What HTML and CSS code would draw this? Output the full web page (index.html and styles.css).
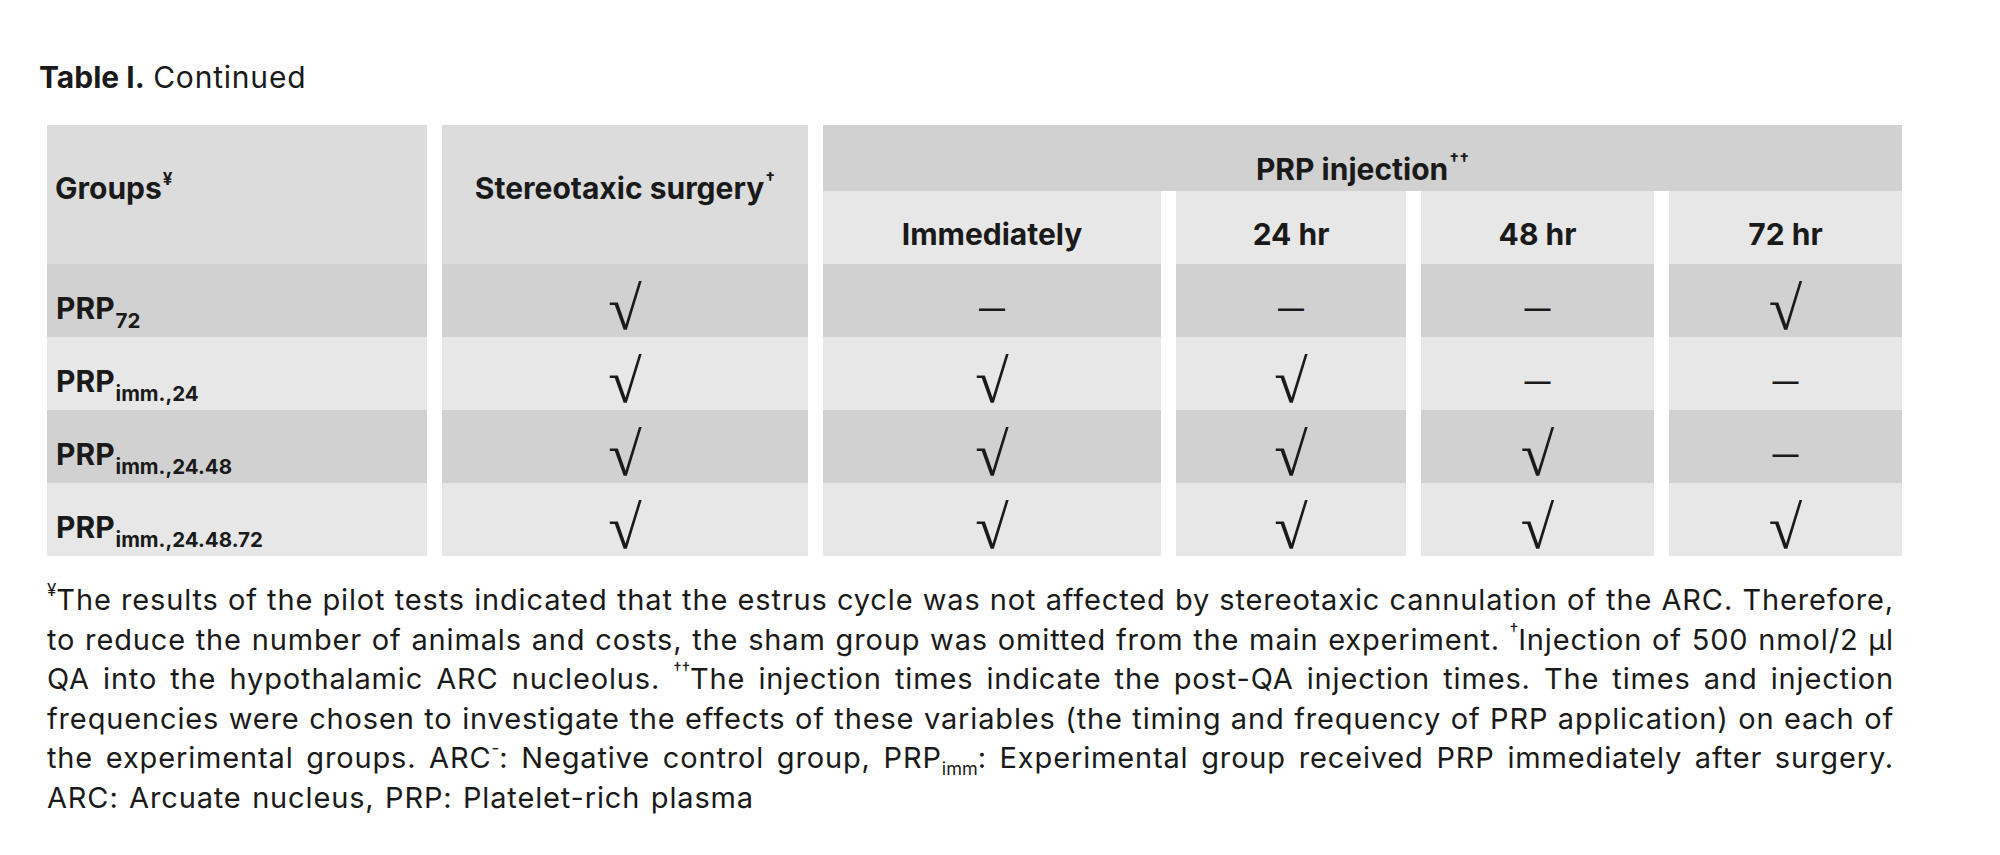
FILE: index.html
```html
<!DOCTYPE html>
<html lang="en">
<head>
<meta charset="utf-8">
<title>Table I. Continued</title>
<link rel="stylesheet" href="styles.css">
</head>
<body>
<div class="page">
  <p class="title"><b>Table I.</b> <span class="reg">Continued</span></p>

  <div class="grid">
    <div class="cell hdr-main name-hdr"><span class="txt">Groups<sup class="hsup">¥</sup></span></div>
    <div class="cell hdr-main"><span class="txt">Stereotaxic surgery<sup class="hsup">†</sup></span></div>
    <div class="cell hdr-top span4"><span class="txt">PRP injection<sup class="hsup">††</sup></span></div>
    <div class="cell hdr-sub"><span class="txt">Immediately</span></div>
    <div class="cell hdr-sub"><span class="txt">24 hr</span></div>
    <div class="cell hdr-sub"><span class="txt">48 hr</span></div>
    <div class="cell hdr-sub"><span class="txt">72 hr</span></div>

    <div class="row dark">
      <div class="cell name"><span class="txt">PRP<sub class="gsub">72</sub></span></div>
      <div class="cell"><span class="chk">√</span></div>
      <div class="cell"><span class="dash">—</span></div>
      <div class="cell"><span class="dash">—</span></div>
      <div class="cell"><span class="dash">—</span></div>
      <div class="cell"><span class="chk">√</span></div>
    </div>
    <div class="row light">
      <div class="cell name"><span class="txt">PRP<sub class="gsub">imm.,24</sub></span></div>
      <div class="cell"><span class="chk">√</span></div>
      <div class="cell"><span class="chk">√</span></div>
      <div class="cell"><span class="chk">√</span></div>
      <div class="cell"><span class="dash">—</span></div>
      <div class="cell"><span class="dash">—</span></div>
    </div>
    <div class="row dark">
      <div class="cell name"><span class="txt">PRP<sub class="gsub">imm.,24.48</sub></span></div>
      <div class="cell"><span class="chk">√</span></div>
      <div class="cell"><span class="chk">√</span></div>
      <div class="cell"><span class="chk">√</span></div>
      <div class="cell"><span class="chk">√</span></div>
      <div class="cell"><span class="dash">—</span></div>
    </div>
    <div class="row light">
      <div class="cell name"><span class="txt">PRP<sub class="gsub">imm.,24.48.72</sub></span></div>
      <div class="cell"><span class="chk">√</span></div>
      <div class="cell"><span class="chk">√</span></div>
      <div class="cell"><span class="chk">√</span></div>
      <div class="cell"><span class="chk">√</span></div>
      <div class="cell"><span class="chk">√</span></div>
    </div>
  </div>

  <div class="notes">
    <span class="ln"><sup class="nsup">¥</sup>The results of the pilot tests indicated that the estrus cycle was not affected by stereotaxic cannulation of the ARC. Therefore,</span>
    <span class="ln">to reduce the number of animals and costs, the sham group was omitted from the main experiment. <sup class="nsup">†</sup>Injection of 500 nmol/2 µl</span>
    <span class="ln">QA into the hypothalamic ARC nucleolus. <sup class="nsup">††</sup>The injection times indicate the post-QA injection times. The times and injection</span>
    <span class="ln">frequencies were chosen to investigate the effects of these variables (the timing and frequency of PRP application) on each of</span>
    <span class="ln">the experimental groups. ARC<sup class="nsup">-</sup>: Negative control group, PRP<sub class="nsub">imm</sub>: Experimental group received PRP immediately after surgery.</span>
    <span class="ln last">ARC: Arcuate nucleus, PRP: Platelet-rich plasma</span>
  </div>
</div>
</body>
</html>
```

FILE: styles.css
```css
html, body {
  margin: 0;
  padding: 0;
  background: #ffffff;
}

body {
  font-family: Inter, Lato, "Liberation Sans", sans-serif;
  color: #1a1a1a;
}

.page {
  padding-top: 59px;
}

.title {
  margin: 0 0 30px 39px;
  font-size: 30px;
  line-height: 36px;
  font-weight: 400;
}

.title b {
  font-weight: 700;
}

.title .reg {
  letter-spacing: 0.8px;
}

.grid {
  margin-left: 47px;
  display: grid;
  grid-template-columns: 380px 366px 338px 230px 233px 233px;
  grid-template-rows: 66px 73px 73px 73px 73px 73px;
  column-gap: 15px;
  row-gap: 0;
}

.row {
  display: contents;
}

.cell {
  display: flex;
  align-items: center;
  justify-content: center;
  font-size: 30px;
  line-height: 36px;
  font-weight: 700;
  white-space: nowrap;
  box-sizing: border-box;
  padding-top: 14px;
}

.txt {
  display: block;
}

.hdr-main {
  grid-row: span 2;
  background: #dcdcdc;
  padding-top: 0;
  padding-bottom: 14px;
}

.name-hdr {
  justify-content: flex-start;
  padding-left: 8px;
}

.span4 {
  grid-column: span 4;
}

.hdr-top {
  background: #d1d1d1;
  padding-top: 21px;
}

.hdr-sub {
  background: #e7e7e7;
  padding-top: 12px;
}

.row.dark > .cell {
  background: #d1d1d1;
}

.row.light > .cell {
  background: #e7e7e7;
}

.name {
  justify-content: flex-start;
  padding-left: 9px;
}

.hsup {
  display: inline-block;
  font-size: 17px;
  line-height: 0;
  vertical-align: 14px;
  margin-left: 1px;
}

.gsub {
  font-size: 20.5px;
  line-height: 0;
  vertical-align: -9px;
  margin-left: 1px;
}

.chk {
  display: inline-block;
  font-family: "Liberation Serif", "DejaVu Serif", serif;
  font-weight: 400;
  font-size: 61px;
  line-height: 36px;
  transform: translateY(1px);
}

.dash {
  font-family: "Liberation Sans", sans-serif;
  font-weight: 700;
  font-size: 26px;
  line-height: 36px;
}

.notes {
  margin: 24px 0 0 47px;
  width: 1847px;
  font-size: 29px;
  line-height: 39.5px;
  font-weight: 400;
  letter-spacing: 0.85px;
}

.ln {
  display: block;
  white-space: nowrap;
  text-align: justify;
  text-align-last: justify;
}

.ln.last {
  text-align-last: left;
  word-spacing: 1.5px;
}

.nsup {
  display: inline-block;
  font-size: 17px;
  line-height: 0;
  vertical-align: 14px;
  letter-spacing: 0;
}

.nsub {
  font-size: 18px;
  line-height: 0;
  vertical-align: -7px;
  letter-spacing: 0;
}
```
